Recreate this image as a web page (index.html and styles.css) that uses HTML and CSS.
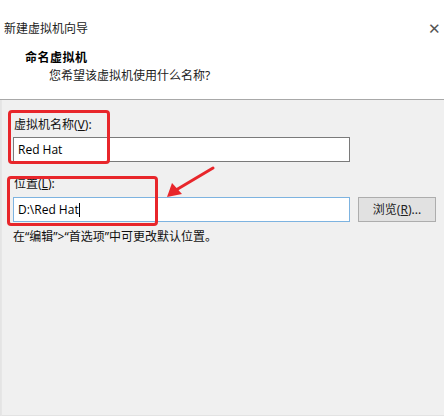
FILE: index.html
```html
<!DOCTYPE html>
<html lang="zh-CN">
<head>
<meta charset="utf-8">
<link rel="stylesheet" href="styles.css">
</head>
<body>
<div class="dialog">
  <div class="header">
    <div class="titlebar">
      <span class="title">新建虚拟机向导</span>
      <span class="closeglyph">✕</span>
    </div>
    <div class="heading">命名虚拟机</div>
    <div class="subheading">您希望该虚拟机使用什么名称?</div>
  </div>
  <div class="panel">
    <div class="label">虚拟机名称(<u>V</u>):</div>
    <div class="row">
      <div class="input">Red Hat</div>
    </div>
    <div class="label label2">位置(<u>L</u>):</div>
    <div class="row row2">
      <div class="input focus">D:\Red Hat<span class="caret"></span></div>
      <div class="button">浏览(<u>R</u>)...</div>
    </div>
    <div class="hint">在“编辑”&gt;“首选项”中可更改默认位置。</div>
    <div class="mark mark1"></div>
    <div class="mark mark2"></div>
    <svg class="arrow" width="60" height="40" viewBox="0 0 60 40">
      <path d="M52 5 L15 27" stroke="#e8262b" stroke-width="3" stroke-linecap="round" fill="none"/>
      <path d="M6 34 L11 20 L21 31 Z" fill="#e8262b"/>
    </svg>
  </div>
</div>
</body>
</html>
```
FILE: styles.css
```css
html, body {
  margin: 0;
  padding: 0;
  background: #ffffff;
}
body {
  width: 444px;
  height: 416px;
  overflow: hidden;
  font-family: "Noto Sans", "Noto Sans CJK SC", sans-serif;
  font-size: 12px;
  color: #1a1a1a;
}
.dialog {
  display: flex;
  flex-direction: column;
  width: 444px;
  height: 416px;
}
.header {
  height: 100px;
  background: #ffffff;
  border-bottom: 1px solid #a8a8a8;
  box-sizing: border-box;
  padding-top: 21px;
}
.titlebar {
  display: flex;
  align-items: center;
  height: 16px;
  padding-left: 4px;
  padding-right: 3px;
}
.title {
  line-height: 16px;
  color: #222;
}
.closeglyph {
  margin-left: auto;
  font-family: "DejaVu Sans", sans-serif;
  font-size: 15px;
  font-weight: 300;
  line-height: 16px;
  color: #555555;
}
.heading {
  margin-top: 13px;
  padding-left: 25px;
  font-weight: bold;
  line-height: 16px;
  letter-spacing: 0.5px;
  color: #000;
}
.subheading {
  margin-top: 2px;
  padding-left: 49px;
  line-height: 16px;
  color: #222;
}
.panel {
  flex: 1;
  position: relative;
  background: #f0f0f0;
  padding: 17px 0 0 12px;
  border-left: 1px solid #e4e4e4;
  box-shadow: inset 5px 0 0 -4px #e6e6e6, inset 0 -6px 0 -5px #e3e3e3;
}
.label {
  line-height: 16px;
  padding-left: 1px;
  color: #111;
}
.label2 {
  margin-top: 14px;
}
.row {
  display: flex;
  align-items: center;
  gap: 8px;
  margin-top: 4px;
}
.row2 {
  margin-top: 5px;
}
.input {
  width: 337px;
  height: 25px;
  box-sizing: border-box;
  background: #ffffff;
  border: 1px solid #7a7a7a;
  padding-left: 4px;
  line-height: 23px;
  font-family: "Open Sans", "Noto Sans", sans-serif;
  font-size: 12px;
  color: #000;
  display: flex;
  align-items: center;
}
.focus {
  border-color: #7db3e0;
}
.caret {
  display: inline-block;
  width: 1px;
  height: 14px;
  background: #000;
}
.button {
  width: 78px;
  height: 25px;
  box-sizing: border-box;
  background: #e1e1e1;
  border: 1px solid #adadad;
  text-align: center;
  line-height: 23px;
  color: #222;
}
.hint {
  margin-top: 7px;
  line-height: 16px;
  color: #111;
}
.mark {
  position: absolute;
  border: 3px solid #e8262b;
  border-radius: 4px;
  box-sizing: border-box;
}
.mark1 {
  left: 7px;
  top: 10px;
  width: 102px;
  height: 54px;
}
.mark2 {
  left: 6px;
  top: 76px;
  width: 151px;
  height: 50px;
}
.arrow {
  position: absolute;
  left: 160px;
  top: 63px;
}
```
